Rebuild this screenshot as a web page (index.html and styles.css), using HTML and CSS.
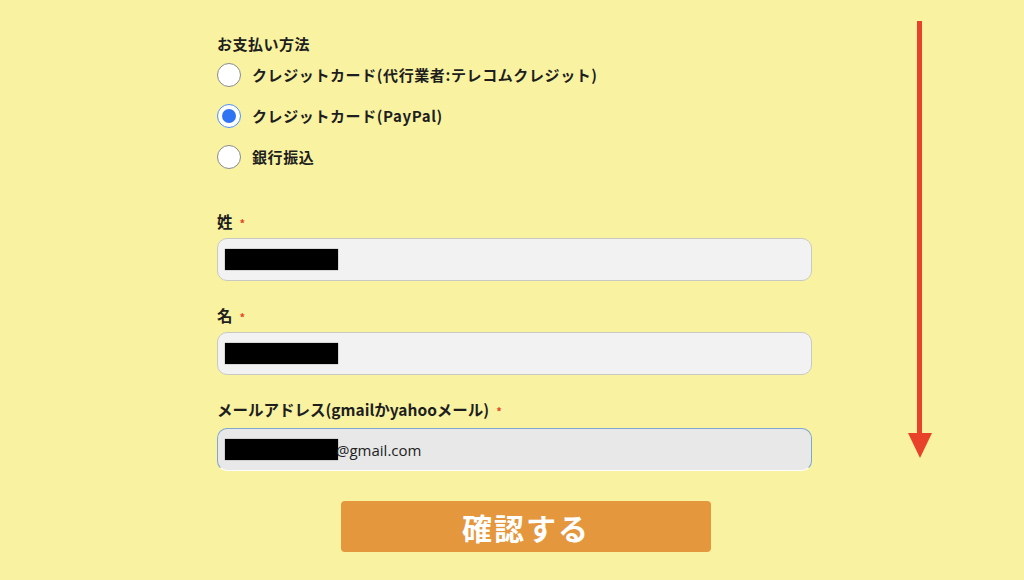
FILE: index.html
```html
<!DOCTYPE html>
<html lang="ja">
<head>
<meta charset="utf-8">
<title>お支払い方法</title>
<link rel="stylesheet" href="styles.css">
</head>
<body>
<div class="page">
  <form class="form">
    <div class="heading">お支払い方法</div>
    <div class="radios">
      <label class="radio-row"><span class="radio"></span><span class="radio-label">クレジットカード(代行業者:テレコムクレジット)</span></label>
      <label class="radio-row"><span class="radio checked"></span><span class="radio-label">クレジットカード(PayPal)</span></label>
      <label class="radio-row"><span class="radio"></span><span class="radio-label">銀行振込</span></label>
    </div>
    <div class="field first">
      <div class="label">姓<span class="req">*</span></div>
      <div class="input"><span class="redact"></span></div>
    </div>
    <div class="field">
      <div class="label">名<span class="req">*</span></div>
      <div class="input"><span class="redact"></span></div>
    </div>
    <div class="field">
      <div class="label">メールアドレス(gmailかyahooメール)<span class="req">*</span></div>
      <div class="input focus"><span class="redact"></span><span class="value">@gmail.com</span></div>
    </div>
    <div class="button-row">
      <div class="button">確認する</div>
    </div>
  </form>
  <div class="arrow">
    <div class="shaft"></div>
    <div class="head"></div>
  </div>
</div>
</body>
</html>
```

FILE: styles.css
```css
html, body {
  margin: 0;
  padding: 0;
  background: #f9f3a1;
  height: 100%;
  overflow: hidden;
}
body {
  font-family: "Noto Sans CJK JP", "Noto Sans", sans-serif;
  color: #1e1e1e;
}
.page {
  display: flex;
  align-items: flex-start;
  height: 580px;
}
.form {
  width: 595px;
  margin-left: 217px;
  display: flex;
  flex-direction: column;
}
.heading {
  margin-top: 34px;
  font-size: 15px;
  line-height: 20px;
  font-weight: 700;
  letter-spacing: 0.5px;
}
.radios {
  margin-top: 9px;
  display: flex;
  flex-direction: column;
  gap: 17px;
}
.radio-row {
  display: flex;
  align-items: center;
  height: 24px;
}
.radio {
  width: 22px;
  height: 22px;
  border: 1px solid #8a8a8a;
  border-radius: 50%;
  background: #fff;
  box-sizing: content-box;
  flex: none;
}
.radio.checked {
  border-color: #4d8ff7;
  background: #fff;
  position: relative;
}
.radio.checked::after {
  content: "";
  position: absolute;
  left: 4px;
  top: 4px;
  width: 14px;
  height: 14px;
  border-radius: 50%;
  background: #2f74f2;
}
.radio-label {
  margin-left: 11px;
  font-size: 15px;
  font-weight: 700;
  letter-spacing: 0.6px;
  line-height: 20px;
}
.field {
  margin-top: 24px;
  display: flex;
  flex-direction: column;
}
.field.first {
  margin-top: 42px;
}
.label {
  font-size: 15.5px;
  font-weight: 700;
  line-height: 20px;
  height: 20px;
  display: flex;
  align-items: center;
}
.req {
  color: #e2442a;
  font-size: 11px;
  line-height: 11px;
  margin-left: 7px;
  margin-top: 4px;
}
.input {
  margin-top: 7px;
  height: 41px;
  border: 1px solid #c9c9c4;
  border-radius: 10px;
  background: #f2f2f2;
  display: flex;
  align-items: center;
  padding-left: 7px;
}
.input.focus {
  margin-top: 9px;
  background: #e8e8e8;
  border-color: #7fa6cf;
  border-bottom-color: #fff;
  height: 41px;
}
.redact {
  display: block;
  width: 113px;
  height: 21px;
  background: #000;
  box-shadow: 0 0 1px #555;
}
.value {
  font-family: "Open Sans", "Noto Sans", sans-serif;
  font-size: 15px;
  color: #222;
  margin-left: -2px;
}
.button-row {
  margin-top: 30px;
  display: flex;
}
.button {
  margin-left: 124px;
  width: 370px;
  height: 51px;
  background: #e4973c;
  border-radius: 4px;
  color: #fff;
  font-size: 30px;
  font-weight: 700;
  letter-spacing: 2px;
  display: flex;
  align-items: center;
  justify-content: center;
}
.arrow {
  margin-left: 95px;
  margin-top: 21px;
  width: 25px;
  display: flex;
  flex-direction: column;
  align-items: center;
}
.shaft {
  width: 5px;
  height: 412px;
  background: #e8432a;
}
.head {
  width: 0;
  height: 0;
  border-left: 12.5px solid transparent;
  border-right: 12.5px solid transparent;
  border-top: 25px solid #e8432a;
}
```
